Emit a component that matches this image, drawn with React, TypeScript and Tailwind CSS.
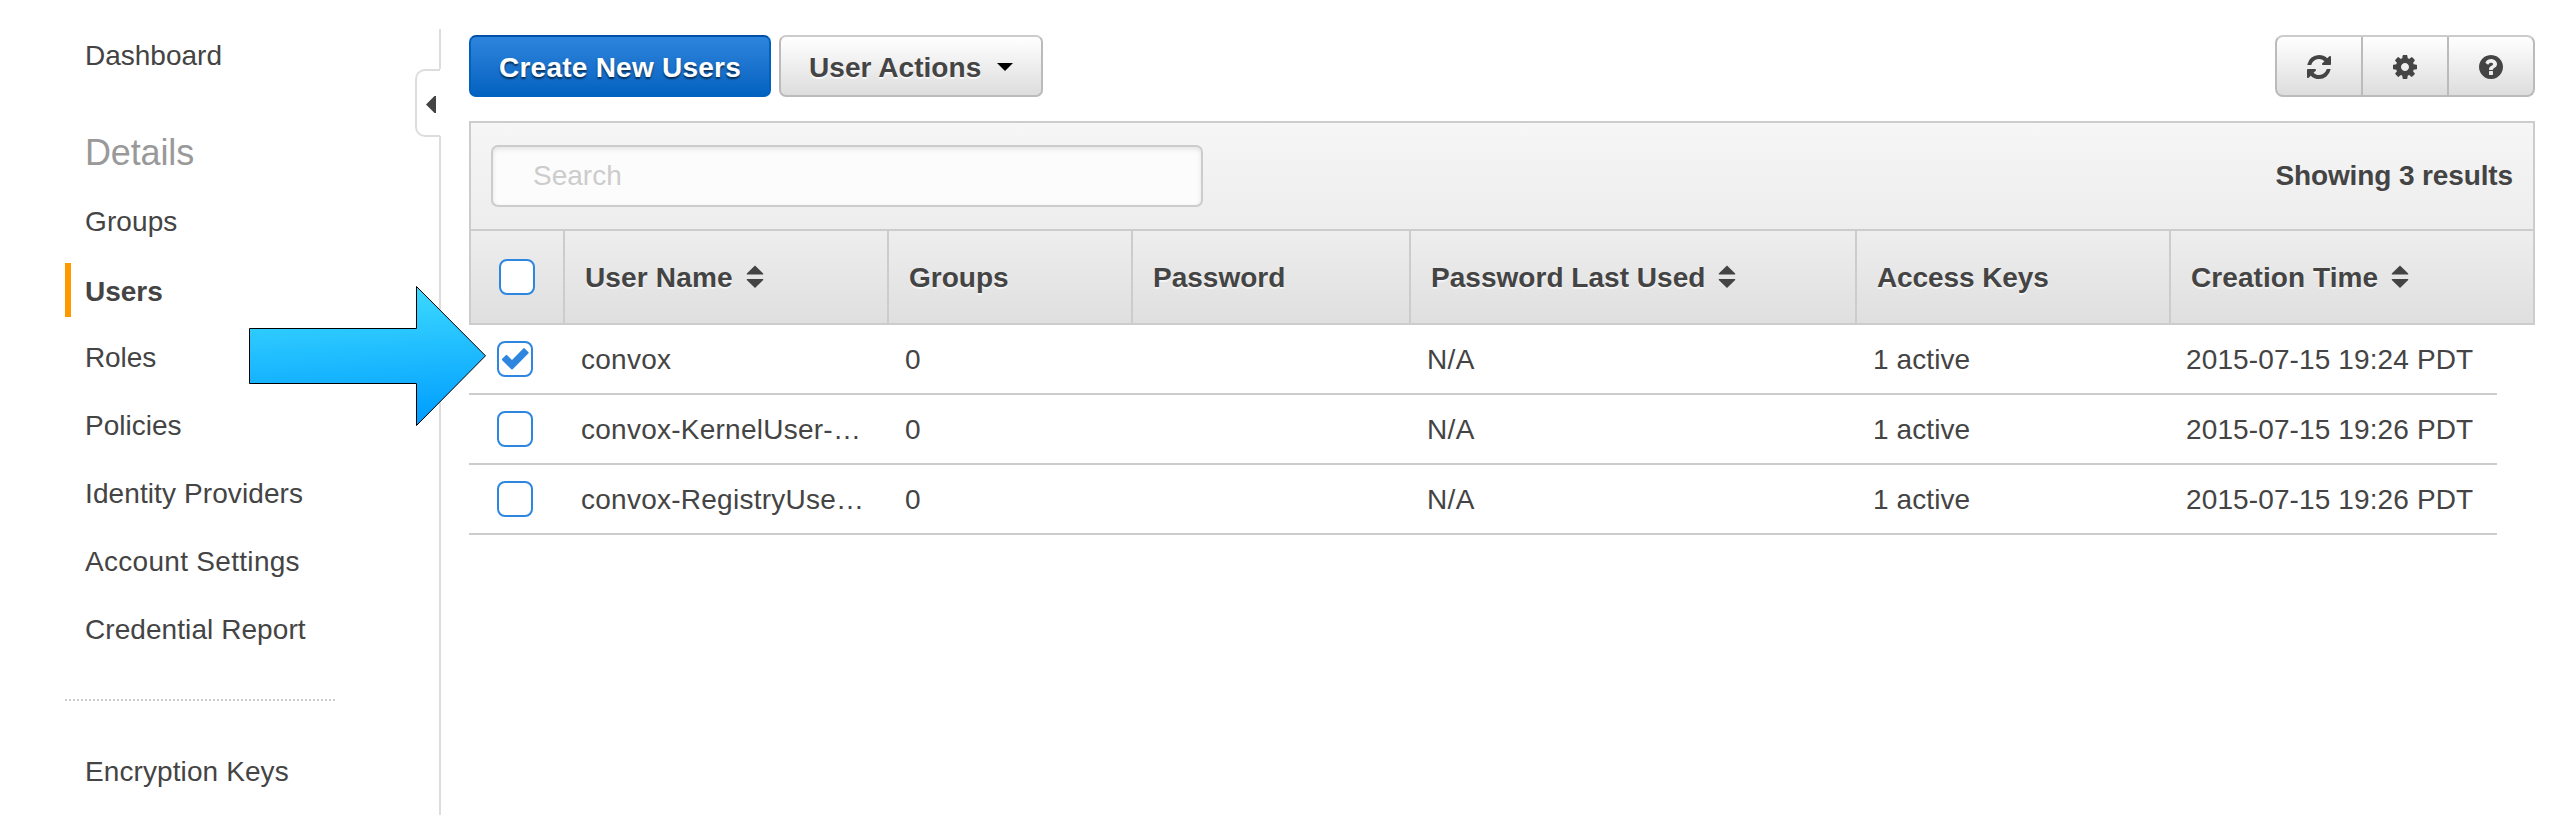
import React from "react";

const link = "flex h-[68px] items-center pl-[20px] pt-[2px]";

const columns = [
  { label: "User Name", w: "w-[324px] tracking-[0.15px]", sort: true },
  { label: "Groups", w: "w-[244px]" },
  { label: "Password", w: "w-[278px]" },
  { label: "Password Last Used", w: "w-[446px] tracking-[0.03px]", sort: true },
  { label: "Access Keys", w: "w-[314px] tracking-[-0.1px]" },
  { label: "Creation Time", w: "flex-1 tracking-[0.08px]", sort: true },
];

const rows = [
  { name: "convox", time: "2015-07-15 19:24 PDT", checked: true },
  { name: "convox-KernelUser-…", time: "2015-07-15 19:26 PDT" },
  { name: "convox-RegistryUse…", time: "2015-07-15 19:26 PDT" },
];

function SortIcon() {
  return (
    <svg className="ml-[13px] mt-[-2px]" width="18" height="24" viewBox="0 0 18 24" fill="#444">
      <path d="M9 0.500 L17.200 8.500 V9.500 H0.800 V8.500 Z M9 23 L0.800 15 V14 H17.200 V15 Z" />
    </svg>
  );
}

function Checkbox({ checked }: { checked?: boolean }) {
  return (
    <span className="flex h-[36px] w-[36px] items-center justify-center rounded-[8px] border-2 border-[#2e86de] bg-white">
      {checked && (
        <svg width="28" height="22" viewBox="0 0 28 22" className="shrink-0 overflow-visible">
          <path
            d="M1.900 11.500 L5.500 7.900 L11 13.500 L23 1.100 L26.600 4.700 L11 20.500 Z"
            fill="#2e86de"
            stroke="#2e86de"
            strokeWidth="2"
            strokeLinejoin="round"
          />
        </svg>
      )}
    </span>
  );
}

const toolIcons = [
  "M1639 1056q0 5-1 7-64 268-268 434.5t-478 166.5q-146 0-282.5-55t-243.5-157l-129 129q-19 19-45 19t-45-19-19-45v-448q0-26 19-45t45-19h448q26 0 45 19t19 45-19 45l-137 137q71 66 161 102t187 36q134 0 250-65t186-179q11-17 53-117 8-23 30-23h192q13 0 22.5 9.5t9.5 22.5zm25-800v448q0 26-19 45t-45 19h-448q-26 0-45-19t-19-45 19-45l138-138q-148-137-349-137-134 0-250 65t-186 179q-11 17-53 117-8 23-30 23h-199q-13 0-22.5-9.5t-9.5-22.5v-7q65-268 270-434.5t480-166.5q146 0 284 55.5t245 156.5l130-129q19-19 45-19t45 19 19 45z",
  "M1152 896q0-106-75-181t-181-75-181 75-75 181 75 181 181 75 181-75 75-181zm512-109v222q0 12-8 23t-20 13l-185 28q-19 54-39 91 35 50 107 138 10 12 10 25t-9 23q-27 37-99 108t-94 71q-12 0-26-9l-138-108q-44 23-91 38-16 136-29 186-7 28-36 28h-222q-14 0-24.5-8.5t-11.5-21.5l-28-184q-49-16-90-37l-141 107q-10 9-25 9-14 0-25-11-126-114-165-168-7-10-7-23 0-12 8-23 15-21 51-66.5t54-70.5q-27-50-41-99l-183-27q-13-2-21-12.5t-8-23.5v-222q0-12 8-23t19-13l186-28q14-46 39-92-40-57-107-138-10-12-10-24 0-10 9-23 26-36 98.5-107.5t94.5-71.5q13 0 26 10l138 107q44-23 91-38 16-136 29-186 7-28 36-28h222q14 0 24.5 8.5t11.5 21.5l28 184q49 16 90 37l142-107q9-9 24-9 13 0 25 10 129 119 165 170 7 8 7 22 0 12-8 23-15 21-51 66.5t-54 70.5q26 50 41 98l183 28q13 2 21 12.5t8 23.5z",
  "M1024 1376v-192q0-14-9-23t-23-9h-192q-14 0-23 9t-9 23v192q0 14 9 23t23 9h192q14 0 23-9t9-23zm256-672q0-88-55.5-163t-138.5-116-170-41q-243 0-371 213-15 24 8 42l132 100q7 6 19 6 16 0 25-12 53-68 86-92 34-24 86-24 48 0 85.500 26t37.500 59q0 38-20 61t-68 45q-63 28-115.500 86.500t-52.500 125.500v36q0 14 9 23t23 9h192q14 0 23-9t9-23q0-19 21.500-49.500t54.500-49.500q32-18 49-28.500t46-35 44.500-48 28-60.500 12.500-81zm384 192q0 209-103 385.500t-279.500 279.500-385.500 103-385.500-103-279.500-279.500-103-385.500 103-385.500 279.500-279.500 385.500-103 385.500 103 279.500 279.500 103 385.500z",
];

export default function App() {
  return (
    <div className="relative flex h-[815px] w-full overflow-hidden bg-white font-['Liberation_Sans',Arial,sans-serif] text-[28px] text-[#444]">
      <nav className="flex w-[415px] flex-col pl-[65px]">
        <div className={`${link} mt-[21px]`}>Dashboard</div>
        <div className="mt-[30px] flex h-[68px] items-center pl-[20px] text-[36px] tracking-[-0.15px] text-[#999]">Details</div>
        <div className={`${link} tracking-[0.1px]`}>Groups</div>
        <div className="mt-[8px] flex h-[54px] items-center border-l-[6px] border-[#f90] pl-[14px] pt-[4px] font-bold">Users</div>
        <div className={`${link} mt-[6px] tracking-[-0.1px]`}>Roles</div>
        <div className={link}>Policies</div>
        <div className={`${link} tracking-[0.1px]`}>Identity Providers</div>
        <div className={`${link} tracking-[0.3px]`}>Account Settings</div>
        <div className={`${link} tracking-[0.07px]`}>Credential Report</div>
        <div className="mt-[36px] h-[2px] w-[270px] bg-[repeating-linear-gradient(90deg,#ccc_0_2px,transparent_2px_4px)]" />
        <div className={`${link} mt-[36px] tracking-[0.1px]`}>Encryption Keys</div>
      </nav>

      <div className="flex w-[26px] flex-col pt-[29px]">
        <div className="h-[40px] border-r-2 border-[#ddd]" />
        <div className="mr-px flex h-[68px] items-center justify-end rounded-l-[10px] border-y-2 border-l-2 border-[#ddd] pr-[4px] pt-[3px]">
          <svg width="10" height="17" viewBox="0 0 10 17" fill="#444">
            <path d="M0 8.500 L8.500 0 H10 V17 H8.500 Z" />
          </svg>
        </div>
        <div className="-mt-px flex-1 border-r-2 border-[#ddd]" />
      </div>

      <main className="ml-[28px] mr-[16px] flex min-w-0 flex-1 flex-col pt-[35px]">
        <div className="flex h-[62px]">
          <button className="w-[302px] rounded-[7px] border-2 border-[#0061bf] border-t-[#0050a8] bg-linear-to-b from-[#2e86de] to-[#0061bf] bg-origin-border pt-[3px] font-bold tracking-[0.25px] text-white [text-shadow:0_2px_2px_rgba(0,0,0,0.6)]">
            Create New Users
          </button>
          <button className="ml-[8px] flex w-[264px] items-center rounded-[7px] border-2 border-[#bbb] border-t-[#ccc] bg-linear-to-b from-white to-[#ddd] pl-[28px] pt-[3px] font-bold tracking-[0.05px] [text-shadow:0_2px_1px_#f8f8f8]">
            User Actions
            <svg className="ml-[16px] mt-[-1px]" width="16" height="8" viewBox="0 0 16 8">
              <path d="M0 0 H16 L8 8 Z" fill="#000" />
            </svg>
          </button>
          <div className="ml-auto flex w-[260px] overflow-hidden rounded-[8px] border-2 border-[#bbb] border-t-[#ccc] bg-linear-to-b from-white to-[#ddd]">
            {toolIcons.map((d, i) => (
              <button key={i} className="flex flex-1 items-center justify-center border-r-2 border-[#bbb] pt-[2px] last:border-r-0">
                <svg width="28" height="28" viewBox="0 0 1792 1792" fill="#444">
                  <path d={d} />
                </svg>
              </button>
            ))}
          </div>
        </div>

        <section className="mt-[24px] border-2 border-[#ccc]">
          <div className="flex h-[106px] items-center justify-between bg-linear-to-b from-[#f6f6f6] to-[#ededed] pl-[20px] pr-[20px]">
            <div className="flex h-[62px] w-[712px] items-center rounded-[7px] border-2 border-[#ccc] bg-[#fcfcfc] pl-[40px] text-[#ccc] shadow-[inset_0_2px_5px_rgba(0,0,0,0.1)]">
              Search
            </div>
            <span className="font-bold tracking-[-0.12px]">Showing 3 results</span>
          </div>
          <div className="flex h-[94px] border-t-2 border-[#ccc] bg-linear-to-b from-[#eee] to-[#dfdfdf]">
            <div className="flex w-[92px] items-center pl-[28px]"><Checkbox /></div>
            {columns.map((c) => (
              <div key={c.label} className={`${c.w} flex items-center border-l-2 border-[#ccc] pl-[20px] pt-[2px] font-bold [text-shadow:0_2px_1px_#f5f5f5]`}>
                {c.label}
                {c.sort && <SortIcon />}
              </div>
            ))}
          </div>
        </section>

        {rows.map((r) => (
          <div key={r.name} className="flex h-[70px] w-[2028px] items-center border-b-2 border-[#ccc]">
            <div className="w-[112px] pl-[28px]"><Checkbox checked={r.checked} /></div>
            <div className="w-[324px] pt-[2px] tracking-[0.25px]">{r.name}</div>
            <div className="w-[522px] pt-[2px]">0</div>
            <div className="w-[446px] pt-[2px] tracking-[0.4px]">N/A</div>
            <div className="w-[313px] pt-[2px] tracking-[0.1px]">1 active</div>
            <div className="whitespace-nowrap pt-[2px] tracking-[0.12px]">{r.time}</div>
          </div>
        ))}
      </main>

      <svg className="absolute left-[248px] top-[284px]" width="240" height="144" viewBox="248 284 240 144">
        <defs>
          <linearGradient id="pointer" x1="0.45" y1="0" x2="0.55" y2="1">
            <stop offset="0" stopColor="#3edbff" />
            <stop offset="0.5" stopColor="#1fbcff" />
            <stop offset="1" stopColor="#009dff" />
          </linearGradient>
        </defs>
        <path d="M249.500 328.500 H416.500 V286.500 L485.500 355.800 L416.500 425.500 V383.500 H249.500 Z" fill="url(#pointer)" stroke="#000" strokeWidth="1" />
      </svg>
    </div>
  );
}
